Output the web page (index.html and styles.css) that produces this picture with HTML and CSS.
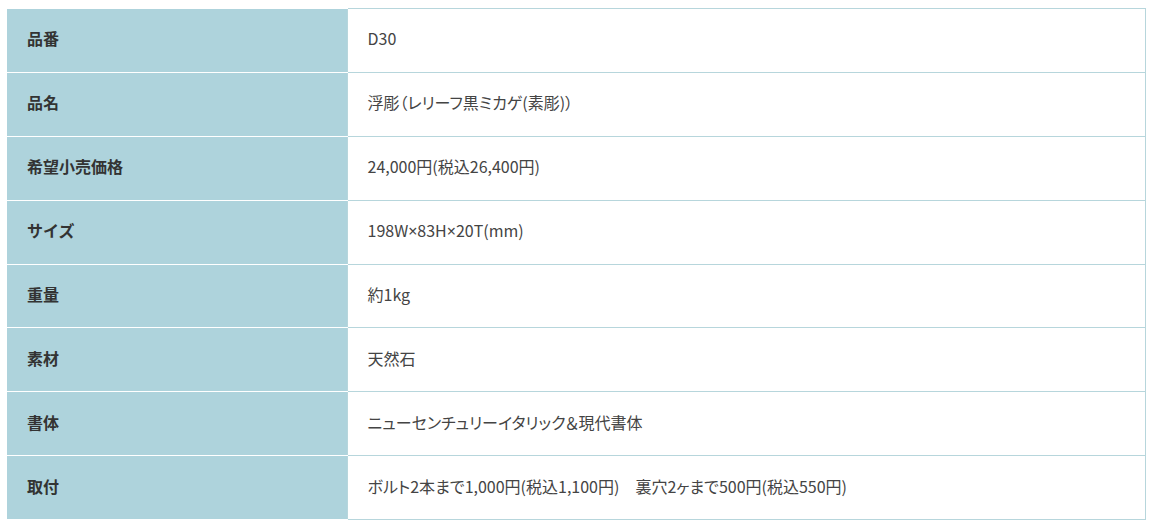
FILE: index.html
```html
<!DOCTYPE html>
<html lang="ja">
<head>
<meta charset="utf-8">
<link rel="stylesheet" href="styles.css">
</head>
<body>
<table class="spec">
  <tbody>
    <tr><th>品番</th><td>D30</td></tr>
    <tr><th>品名</th><td>浮彫（レリーフ黒ミカゲ(素彫)）</td></tr>
    <tr><th>希望小売価格</th><td>24,000円(税込26,400円)</td></tr>
    <tr><th>サイズ</th><td>198W<span class="latin">×</span>83H<span class="latin">×</span>20T(mm)</td></tr>
    <tr><th>重量</th><td>約1kg</td></tr>
    <tr><th>素材</th><td>天然石</td></tr>
    <tr><th>書体</th><td>ニューセンチュリーイタリック＆現代書体</td></tr>
    <tr><th>取付</th><td>ボルト2本まで1,000円(税込1,100円)　裏穴2ヶまで500円(税込550円)</td></tr>
  </tbody>
</table>
</body>
</html>
```

FILE: styles.css
```css
html, body {
  margin: 0;
  padding: 0;
  background: #fff;
}
body {
  padding: 8px 11px 0 7px;
  font-family: "Noto Sans CJK JP", "Noto Sans", sans-serif;
  font-size: 16px;
  line-height: 1.5;
  color: #333;
}
.spec {
  width: 1139px;
  border-collapse: collapse;
  table-layout: fixed;
}
.spec tr {
  height: 63.875px;
}
.spec th {
  width: 340px;
  background: #aed3dc;
  color: #333;
  font-weight: bold;
  text-align: left;
  padding: 0 0 4px 20px;
  border-top: 1px solid #fff;
  border-bottom: 1px solid #fff;
  box-sizing: border-box;
}
.spec td {
  padding: 0 0 4px 20px;
  color: #444;
  border: 1px solid #b7d6dc;
  box-sizing: border-box;
  font-feature-settings: "palt";
}
.latin {
  font-family: "Noto Sans", sans-serif;
}
```
